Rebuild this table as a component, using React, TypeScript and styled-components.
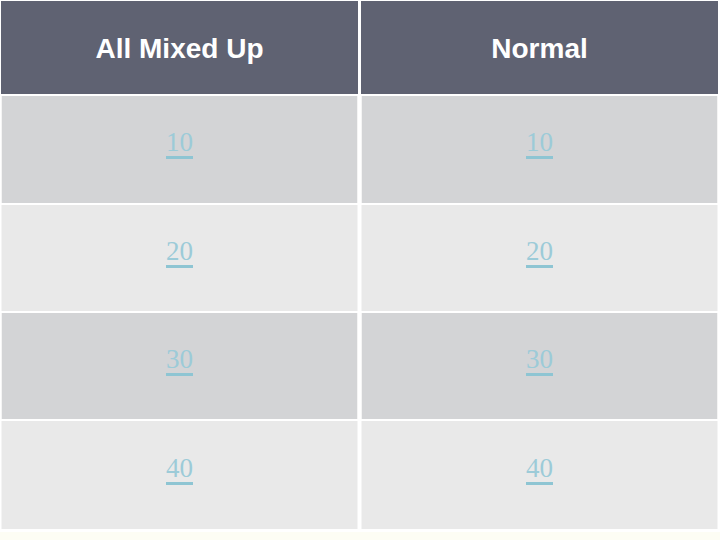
import styled, { createGlobalStyle } from 'styled-components';

const GlobalStyle = createGlobalStyle`
  html, body {
    margin: 0;
    padding: 0;
    background-color: #fdfdf4;
  }
`;

const categories = ['All Mixed Up', 'Normal'];
const points = [10, 20, 30, 40];

const App = () => {
  return (
    <>
      <GlobalStyle />
      <Board>
        {categories.map((name) => (
          <HeaderCell key={name}>{name}</HeaderCell>
        ))}
        {points.map((value, row) =>
          categories.map((name) => (
            <Cell key={`${name}-${value}`} $odd={row % 2 === 0}>
              <Points href="#">{value}</Points>
            </Cell>
          ))
        )}
      </Board>
    </>
  );
};

const Board = styled.div`
  display: grid;
  grid-template-columns: 357px 357px;
  grid-template-rows: 93px 107px 106px 106px 108px;
  gap: 2px 3px;
  width: 720px;
  padding: 1px 0 3px 1px;
  box-sizing: border-box;
  background-color: #ffffff;
`;

const HeaderCell = styled.div`
  display: flex;
  align-items: center;
  justify-content: center;
  background-color: #5f6272;
  color: #ffffff;
  font-family: 'Liberation Sans', Arial, sans-serif;
  font-weight: bold;
  font-size: 28px;
  padding-top: 2px;
`;

const Cell = styled.div<{ $odd: boolean }>`
  display: flex;
  align-items: center;
  justify-content: center;
  background-color: ${(p) => (p.$odd ? '#d3d4d6' : '#e9e9e9')};
  box-shadow: inset -6px 0 0 -5px #f4f4f4, inset 6px 0 0 -5px #f4f4f4;
  padding-bottom: 14px;
`;

const Points = styled.a`
  font-family: 'Liberation Serif', 'Times New Roman', serif;
  font-size: 27px;
  color: #9ccbd8;
  text-decoration: underline;
  text-decoration-color: #8ec5d3;
  text-decoration-thickness: 3px;
  text-underline-offset: 5px;
`;

export default App;
